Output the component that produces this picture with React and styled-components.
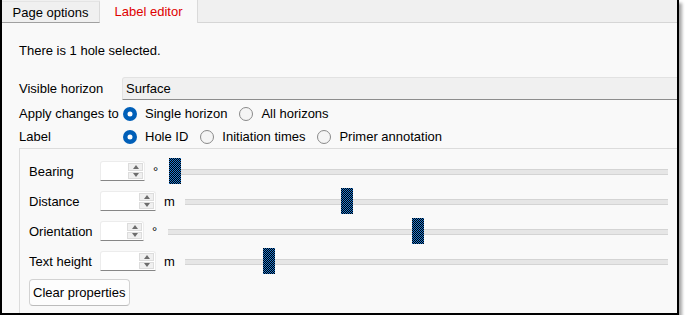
import React from 'react';
import styled, { createGlobalStyle } from 'styled-components';

const Global = createGlobalStyle`
  html, body { margin: 0; padding: 0; background: #fff; }
  body {
    font-family: "Liberation Sans", Arial, sans-serif;
    font-size: 13px;
    color: #000;
  }
  * { box-sizing: border-box; }
`;

const Frame = styled.div`
  width: 679px;
  height: 315px;
  border: 2px solid #000;
  border-top: none;
  box-shadow: 3px 3px 3px rgba(0, 0, 0, 0.35);
  background: #f9f9f9;
  overflow: hidden;
  display: flex;
  flex-direction: column;
`;

const TabBar = styled.div`
  display: flex;
  height: 23px;
  background: #f0f0f0;
  border-bottom: 1px solid #d6d6d6;
  flex-shrink: 0;
`;

const Tab = styled.div`
  width: ${p => p.$w}px;
  height: ${p => (p.$active ? 23 : 22)}px;
  margin-top: ${p => (p.$active ? 0 : 1)}px;
  display: flex;
  align-items: center;
  justify-content: center;
  color: ${p => (p.$active ? '#e00000' : '#000')};
  background: ${p => (p.$active ? '#f9f9f9' : '#f0f0f0')};
  border-right: 1px solid #dadada;
  border-top: ${p => (p.$active ? 'none' : '1px solid #e4e4e4')};
  border-bottom: ${p => (p.$active ? 'none' : '1px solid #a0a0a0')};
  margin-bottom: ${p => (p.$active ? -1 : 0)}px;
  position: relative;
`;

const Content = styled.div`
  padding-left: 17px;
  display: flex;
  flex-direction: column;
`;

const Message = styled.div`
  margin-top: 20px;
  height: 16px;
  line-height: 16px;
`;

const FormRow = styled.div`
  display: flex;
  align-items: center;
  height: 23px;
  flex-shrink: 0;
  margin-top: ${p => p.$mt || 0}px;
`;

const FieldLabel = styled.div`
  width: 103px;
  flex-shrink: 0;
  white-space: nowrap;
`;

const Combo = styled.div`
  flex: 1;
  height: 23px;
  margin-right: -12px;
  background: #f0f0f0;
  border: 1px solid #e2e2e2;
  border-bottom: 1px solid #8c8c8c;
  border-radius: 3px 3px 0 0;
  display: flex;
  align-items: center;
  padding-left: 3px;
`;

const Option = styled.label`
  display: inline-flex;
  align-items: center;
  margin-right: 11px;
  white-space: nowrap;
`;

const Radio = styled.span`
  width: 14px;
  height: 14px;
  margin-left: 1px;
  margin-right: 8px;
  border-radius: 50%;
  flex-shrink: 0;
  ${p =>
    p.$checked
      ? `background: #fff; box-shadow: inset 0 0 0 4.5px #005fb8;`
      : `background: #f5f5f5; border: 1px solid #8a8a8a;`}
`;

const Group = styled.div`
  margin-right: -12px;
  height: 220px;
  flex-shrink: 0;
  border: 1px solid #dcdcdc;
  padding: 7px 20px 0 9px;
  display: flex;
  flex-direction: column;
`;

const SliderRow = styled.div`
  display: flex;
  align-items: center;
  height: 30px;
`;

const RowLabel = styled.div`
  width: 71px;
  flex-shrink: 0;
  white-space: nowrap;
`;

const Spin = styled.div`
  width: ${p => p.$w}px;
  height: 20px;
  flex-shrink: 0;
  background: #fff;
  border: 1px solid #ececec;
  border-bottom: 1px solid #868686;
  border-radius: 3px 3px 0 0;
  display: flex;
  justify-content: flex-end;
  padding: 1px;
`;

const SpinButtons = styled.div`
  width: 15px;
  display: flex;
  flex-direction: column;
  gap: 1px;
`;

const SpinButton = styled.div`
  flex: 1;
  background: #f0f0f0;
  border: 1px solid #dcdcdc;
  display: flex;
  align-items: center;
  justify-content: center;
  &::after {
    content: '';
    width: 0;
    height: 0;
    border-left: 3.5px solid transparent;
    border-right: 3.5px solid transparent;
    ${p =>
      p.$down
        ? 'border-top: 4px solid #6d6d6d;'
        : 'border-bottom: 4px solid #6d6d6d;'}
  }
`;

const Unit = styled.div`
  margin-left: 8px;
  flex-shrink: 0;
  width: ${p => (p.$wide ? 11 : 6)}px;
  white-space: nowrap;
`;

const Slider = styled.div`
  flex: 1;
  margin-left: 10px;
  height: 26px;
  position: relative;
  &::before {
    content: '';
    position: absolute;
    left: 0;
    right: 0;
    top: 11px;
    height: 4px;
    background: #e6e6e6;
    border-top: 1px solid #d4d4d4;
    border-bottom: 1px solid #d4d4d4;
  }
`;

const ThumbSvg = styled.svg`
  position: absolute;
  top: 0;
  left: ${p => p.$x}px;
  width: 12px;
  height: 26px;
  display: block;
`;

// 1px checker dots of the dithered (focused) slider thumb
let dots = '';
for (let y = 0; y < 26; y++) {
  for (let x = (y % 2); x < 12; x += 2) {
    dots += `M${x} ${y}h1v1h-1z`;
  }
}

function Thumb({ x }) {
  return (
    <ThumbSvg $x={x} width="12" height="26" viewBox="0 0 12 26" shapeRendering="crispEdges">
      <rect x="0" y="0" width="12" height="26" fill="#1f78d1" />
      <path d={dots} fill="#000" />
    </ThumbSvg>
  );
}

const Button = styled.button`
  align-self: flex-start;
  margin-top: 3px;
  height: 27px;
  padding: 0 3px;
  font-family: inherit;
  font-size: 13px;
  color: #000;
  background: #fdfdfd;
  border: 1px solid #d2d2d2;
  border-bottom-color: #bcbcbc;
  border-radius: 4px;
`;

const rows = [
  { label: 'Bearing', w: 45, unit: '°', x: 0 },
  { label: 'Distance', w: 56, unit: 'm', x: 156 },
  { label: 'Orientation', w: 44, unit: '°', x: 244 },
  { label: 'Text height', w: 56, unit: 'm', x: 78 },
];

export default function App() {
  return (
    <>
      <Global />
      <Frame>
        <TabBar>
          <Tab $w={98}>Page options</Tab>
          <Tab $w={98} $active>Label editor</Tab>
        </TabBar>
        <Content>
          <Message>There is 1 hole selected.</Message>
          <FormRow $mt={18}>
            <FieldLabel>Visible horizon</FieldLabel>
            <Combo>Surface</Combo>
          </FormRow>
          <FormRow $mt={2}>
            <FieldLabel>Apply changes to</FieldLabel>
            <Option><Radio $checked />Single horizon</Option>
            <Option><Radio />All horizons</Option>
          </FormRow>
          <FormRow>
            <FieldLabel>Label</FieldLabel>
            <Option><Radio $checked />Hole ID</Option>
            <Option><Radio />Initiation times</Option>
            <Option><Radio />Primer annotation</Option>
          </FormRow>
          <Group>
            {rows.map(r => (
              <SliderRow key={r.label}>
                <RowLabel>{r.label}</RowLabel>
                <Spin $w={r.w}>
                  <SpinButtons>
                    <SpinButton />
                    <SpinButton $down />
                  </SpinButtons>
                </Spin>
                <Unit $wide={r.unit === 'm'}>{r.unit}</Unit>
                <Slider>
                  <Thumb x={r.x} />
                </Slider>
              </SliderRow>
            ))}
            <Button>Clear properties</Button>
          </Group>
        </Content>
      </Frame>
    </>
  );
}
